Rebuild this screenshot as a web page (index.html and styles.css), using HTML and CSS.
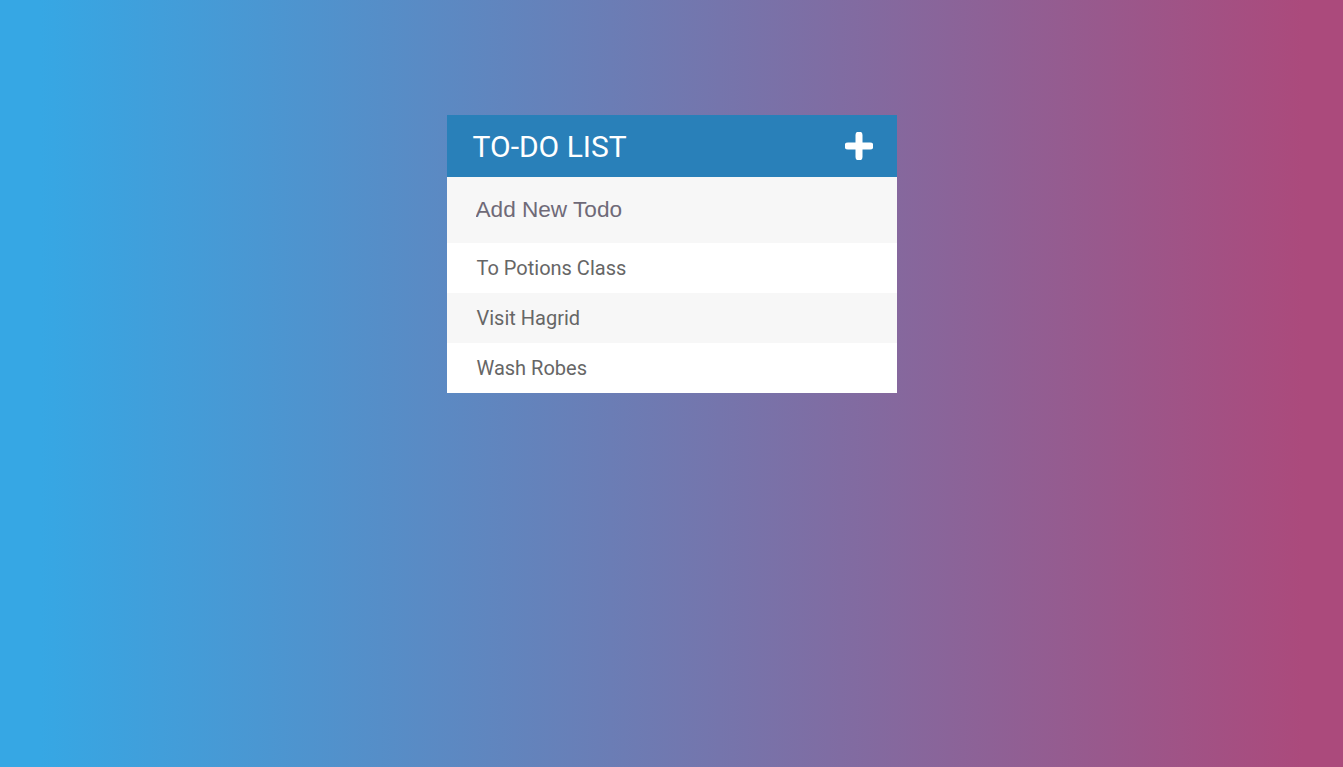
FILE: index.html
```html
<!DOCTYPE html>
<html lang="en">

<head>
  <meta charset="UTF-8">
  <meta name="viewport" content="width=device-width, initial-scale=1.0">
  <title>Todo List</title>
  <link rel="stylesheet" href="styles.css">
</head>

<body>
  <div class="container">
    <!-- Header -->
    <h1>TO-DO LIST
      <span class="add-toggle">
        <svg width="28" height="28" viewBox="0 0 28 28">
          <path d="M14 3v22M3 14h22" stroke="#fff" stroke-width="7" stroke-linecap="round" fill="none"/>
        </svg>
      </span>
    </h1>

    <!-- New todo input -->
    <input type="text" placeholder="Add New Todo">

    <!-- Todo items -->
    <ul>
      <li>To Potions Class</li>
      <li>Visit Hagrid</li>
      <li>Wash Robes</li>
    </ul>
  </div>
</body>

</html>
```

FILE: styles.css
```css
* {
  margin: 0;
  padding: 0;
  box-sizing: border-box;
  font-family: 'Roboto', sans-serif;
}

body {
  min-height: 100vh;
  background: linear-gradient(90deg, #36a7e4 0%, #36a7e4 3%, #ab4a7c 97%, #ab4a7c 100%);
}

.container {
  width: 450px;
  margin: 115px auto 0;
  background-color: #fff;
}

h1 {
  display: flex;
  justify-content: space-between;
  align-items: center;
  height: 62px;
  padding: 0 24px 0 26px;
  background-color: #2980b9;
  color: #fff;
  font-size: 30px;
  font-weight: 400;
}

.add-toggle {
  display: flex;
}

input {
  width: 100%;
  height: 66px;
  padding: 0 29px;
  border: none;
  background-color: #f7f7f7;
  font-family: 'Liberation Sans', Arial, sans-serif;
  font-size: 22.6px;
  color: #666;
}

input::placeholder {
  color: #6f6a78;
}

input:focus {
  outline: none;
  background-color: #fff;
}

ul {
  list-style: none;
}

li {
  height: 50px;
  line-height: 50px;
  padding: 0 30px;
  font-size: 20px;
  color: #666;
}

li:nth-child(2n) {
  background-color: #f7f7f7;
}
```
